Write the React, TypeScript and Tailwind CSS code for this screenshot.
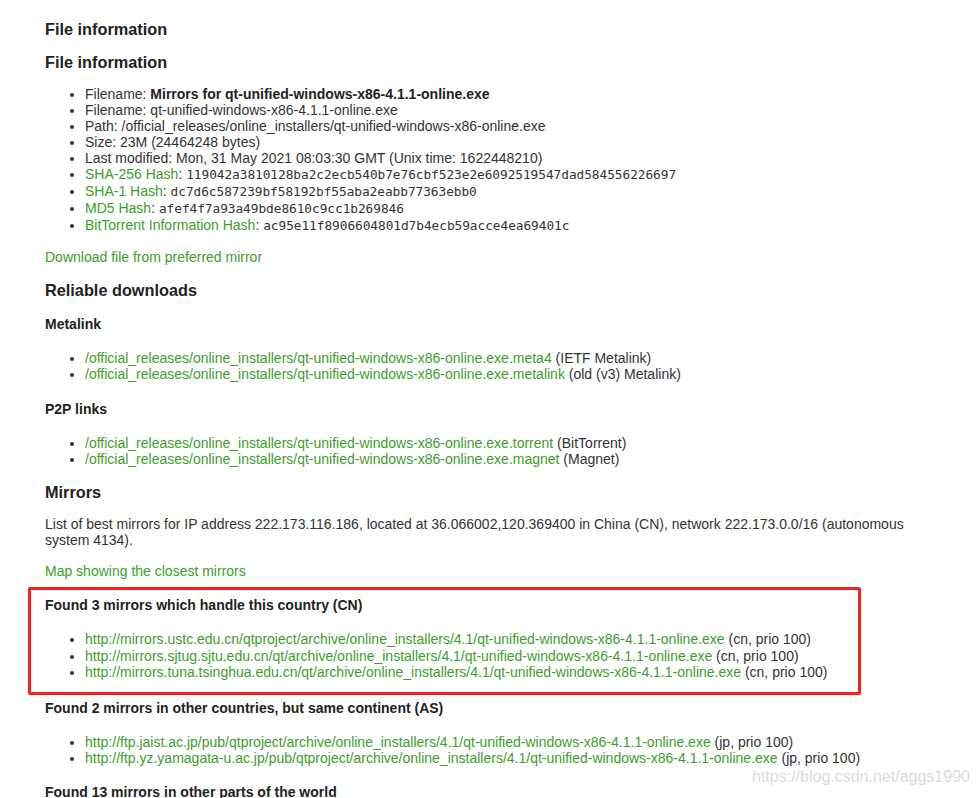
import React from 'react';

const link = 'text-[#3e9d2c] no-underline';

const fileInfo: { label: string; value: string; mono?: boolean; isLink?: boolean; bold?: boolean }[] = [
  { label: 'Filename: ', value: 'Mirrors for qt-unified-windows-x86-4.1.1-online.exe', bold: true },
  { label: 'Filename: ', value: 'qt-unified-windows-x86-4.1.1-online.exe' },
  { label: 'Path: ', value: '/official_releases/online_installers/qt-unified-windows-x86-online.exe' },
  { label: 'Size: ', value: '23M (24464248 bytes)' },
  { label: 'Last modified: ', value: 'Mon, 31 May 2021 08:03:30 GMT (Unix time: 1622448210)' },
  { label: 'SHA-256 Hash', value: '119042a3810128ba2c2ecb540b7e76cbf523e2e6092519547dad584556226697', mono: true, isLink: true },
  { label: 'SHA-1 Hash', value: 'dc7d6c587239bf58192bf55aba2eabb77363ebb0', mono: true, isLink: true },
  { label: 'MD5 Hash', value: 'afef4f7a93a49bde8610c9cc1b269846', mono: true, isLink: true },
  { label: 'BitTorrent Information Hash', value: 'ac95e11f8906604801d7b4ecb59acce4ea69401c', mono: true, isLink: true },
];

const base = '/official_releases/online_installers/qt-unified-windows-x86-online.exe';
const file = 'online_installers/4.1/qt-unified-windows-x86-4.1.1-online.exe';

const cnMirrors = [
  'http://mirrors.ustc.edu.cn/qtproject/archive/' + file,
  'http://mirrors.sjtug.sjtu.edu.cn/qt/archive/' + file,
  'http://mirrors.tuna.tsinghua.edu.cn/qt/archive/' + file,
];

const asMirrors = [
  'http://ftp.jaist.ac.jp/pub/qtproject/archive/' + file,
  'http://ftp.yz.yamagata-u.ac.jp/pub/qtproject/archive/' + file,
];

const H2 = ({ children, className = '' }: { children: React.ReactNode; className?: string }) => (
  <h2 className={`text-[16.3px] font-bold leading-[20px] text-[#222] ${className}`}>{children}</h2>
);

const H4 = ({ children, className = '' }: { children: React.ReactNode; className?: string }) => (
  <h4 className={`text-[14px] font-bold leading-[16px] text-[#222] ${className}`}>{children}</h4>
);

const App = () => {
  return (
    <div className="relative h-[798px] overflow-hidden bg-white font-['Liberation_Sans',Arial,sans-serif] text-[14px] text-[#333]">
      <div className="w-[930px] pl-[45px] pt-[19px]">
        {/* File information */}
        <H2>File information</H2>
        <H2 className="mt-[13px]">File information</H2>
        <ul className="mt-[14px] list-disc pl-[40px] marker:text-[#333]">
          {fileInfo.map((item, i) => (
            <li key={i} className={item.mono ? 'leading-[17px]' : 'leading-[16px]'}>
              {item.isLink ? (
                <>
                  <a className={link}>{item.label}</a>:{' '}
                  <code className="font-['DejaVu_Sans_Mono',monospace] text-[12.8px] tracking-[-0.05px]">{item.value}</code>
                </>
              ) : (
                <>
                  {item.label}
                  {item.bold ? <b className="text-[#222]">{item.value}</b> : item.value}
                </>
              )}
            </li>
          ))}
        </ul>
        <p className="mt-[15px] leading-[16px]">
          <a className={link}>Download file from preferred mirror</a>
        </p>

        {/* Reliable downloads */}
        <H2 className="mt-[15px]">Reliable downloads</H2>
        <H4 className="mt-[16px]">Metalink</H4>
        <ul className="mt-[18px] list-disc pl-[40px] leading-[16px]">
          <li>
            <a className={link}>{base}.meta4</a> (IETF Metalink)
          </li>
          <li>
            <a className={link}>{base}.metalink</a> (old (v3) Metalink)
          </li>
        </ul>
        <H4 className="mt-[19px]">P2P links</H4>
        <ul className="mt-[18px] list-disc pl-[40px] leading-[16px]">
          <li>
            <a className={link}>{base}.torrent</a> (BitTorrent)
          </li>
          <li>
            <a className={link}>{base}.magnet</a> (Magnet)
          </li>
        </ul>

        {/* Mirrors */}
        <H2 className="mt-[15px]">Mirrors</H2>
        <p className="mt-[14px] leading-[16px]">
          List of best mirrors for IP address 222.173.116.186, located at 36.066002,120.369400 in China (CN), network
          222.173.0.0/16 (autonomous system 4134).
        </p>
        <p className="mt-[15px] leading-[16px]">
          <a className={link}>Map showing the closest mirrors</a>
        </p>

        <div className="-ml-[17px] mt-[8px] w-[833px] rounded-[2px] border-[3px] border-[#f5221b] pb-[11px] pl-[14px] pt-[7px]">
          <H4>Found 3 mirrors which handle this country (CN)</H4>
          <ul className="mt-[18px] list-disc pl-[40px] leading-[16.5px]">
            {cnMirrors.map((m) => (
              <li key={m}>
                <a className={link}>{m}</a> (cn, prio 100)
              </li>
            ))}
          </ul>
        </div>

        <H4 className="mt-[5px]">Found 2 mirrors in other countries, but same continent (AS)</H4>
        <ul className="mt-[18px] list-disc pl-[40px] leading-[16px]">
          {asMirrors.map((m) => (
            <li key={m}>
              <a className={link}>{m}</a> (jp, prio 100)
            </li>
          ))}
        </ul>
        <H4 className="mt-[18px]">Found 13 mirrors in other parts of the world</H4>
      </div>

      {/* watermark */}
      <div className="absolute left-[752px] top-[767px] text-[16px] leading-[20px] text-[#dcdcdc]">
        https://blog.csdn.net/aggs1990
      </div>
    </div>
  );
};

export default App;
